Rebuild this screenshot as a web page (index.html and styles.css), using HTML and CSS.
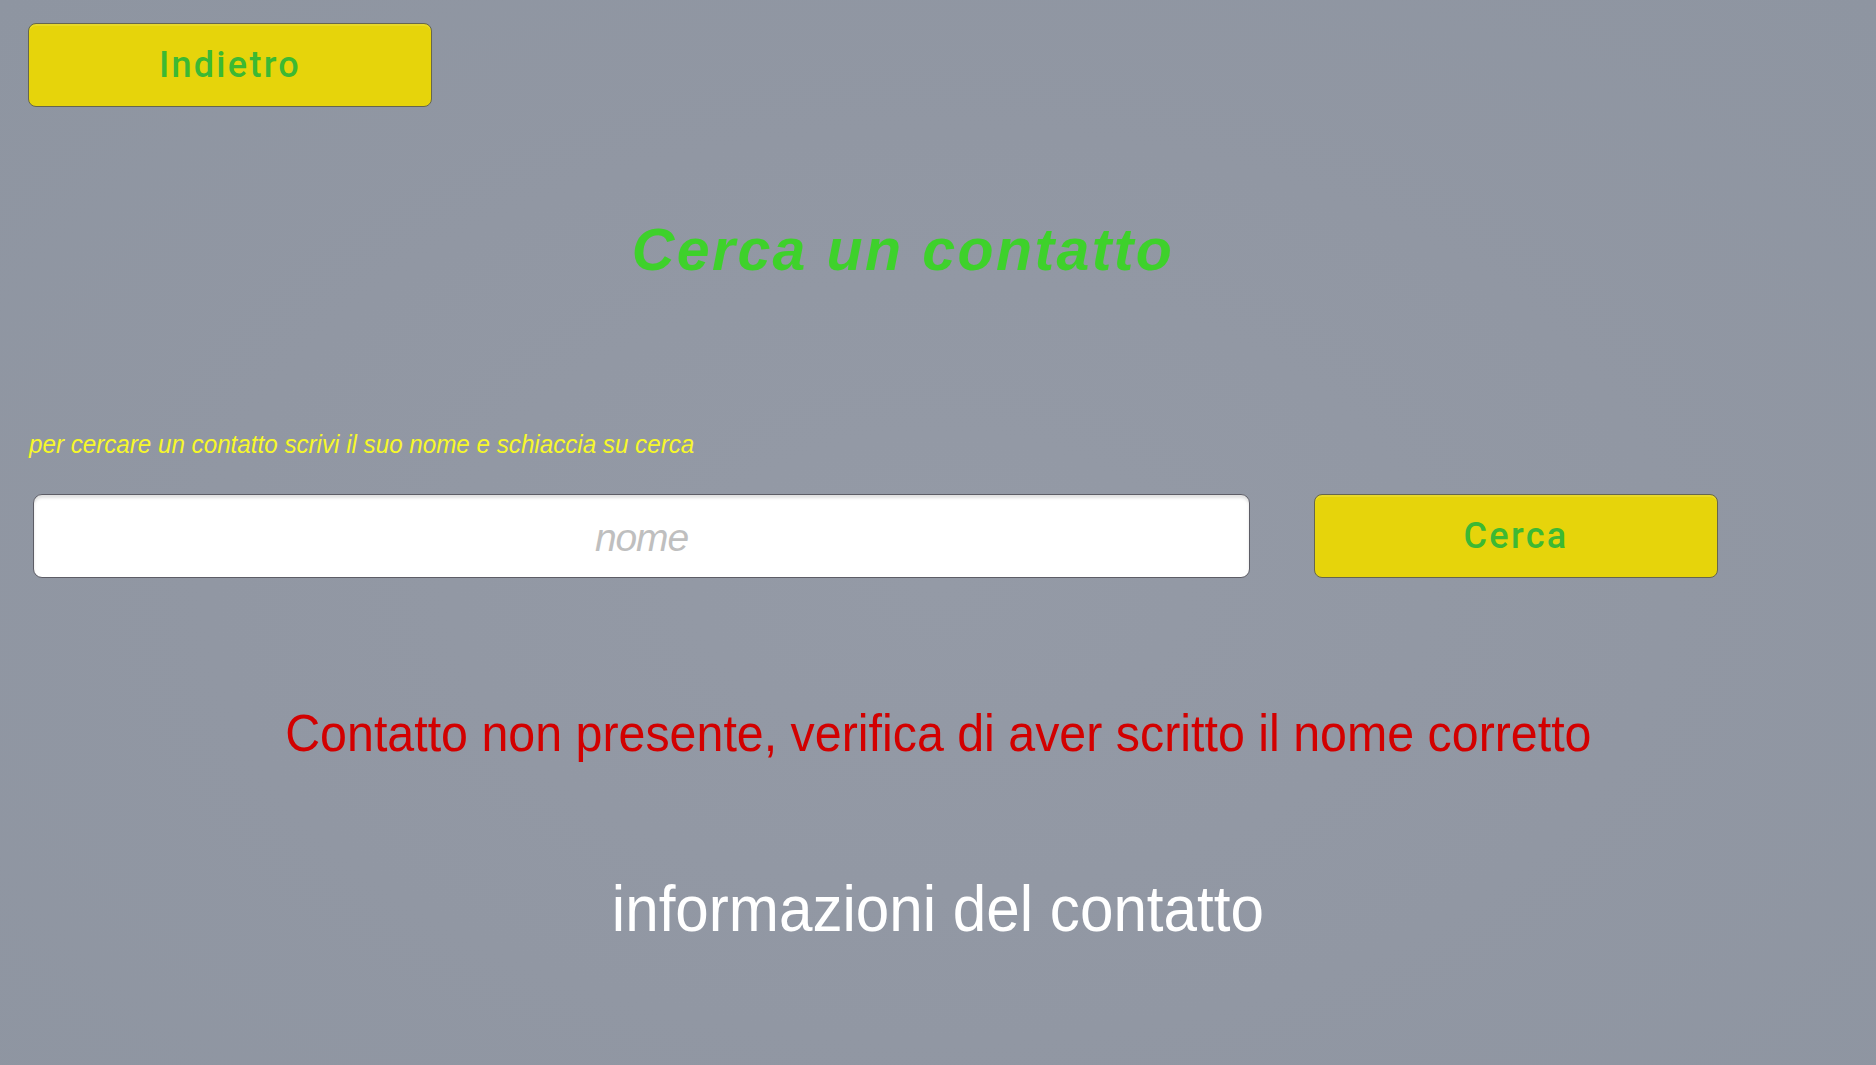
FILE: index.html
```html
<!DOCTYPE html>
<html lang="it">
<head>
<meta charset="utf-8">
<title>Cerca un contatto</title>
<link rel="stylesheet" href="styles.css">
</head>
<body>
<div class="screen">
  <div class="top-bar">
    <button class="btn btn-back">Indietro</button>
  </div>
  <h1 class="title">Cerca un contatto</h1>
  <p class="hint"><span class="hint-text">per cercare un contatto scrivi il suo nome e schiaccia su cerca</span></p>
  <div class="search-row">
    <input class="name-input" type="text" placeholder="nome">
    <button class="btn btn-search">Cerca</button>
  </div>
  <p class="error"><span class="error-text">Contatto non presente, verifica di aver scritto il nome corretto</span></p>
  <p class="info"><span class="info-text">informazioni del contatto</span></p>
</div>
</body>
</html>
```

FILE: styles.css
```css
html, body {
  margin: 0;
  padding: 0;
  height: 100%;
}

body {
  background: radial-gradient(ellipse at 50% 55%, #949aa6 0%, #9197a3 55%, #8e95a1 100%);
  font-family: "Liberation Sans", Arial, sans-serif;
  overflow: hidden;
}

.screen {
  width: 1876px;
  height: 1065px;
  display: flex;
  flex-direction: column;
}

.top-bar {
  padding: 23px 0 0 28px;
  display: flex;
}

.btn {
  width: 404px;
  height: 84px;
  background: #e6d40b;
  border: 1px solid #66664e;
  border-radius: 8px;
  box-shadow: inset 0 2px 0 rgba(255, 255, 255, 0.12);
  color: #3cb933;
  font-family: Roboto, "Liberation Sans", sans-serif;
  font-weight: 500;
  font-size: 36px;
  letter-spacing: 2.3px;
  padding: 0;
  cursor: pointer;
}

.title {
  margin: 108px 0 0 0;
  padding-right: 70px;
  text-align: center;
  font-size: 59px;
  line-height: 70px;
  font-style: italic;
  font-weight: bold;
  letter-spacing: 2.4px;
  color: #3ed12b;
}

.hint {
  margin: 144px 0 0 0;
  padding-left: 29px;
  font-size: 26px;
  line-height: 30px;
  height: 30px;
  white-space: nowrap;
}

.hint-text {
  display: inline-block;
  font-style: italic;
  color: #f7f82a;
  transform: scaleX(0.93);
  transform-origin: left center;
}

.search-row {
  margin-top: 35px;
  padding-left: 33px;
  display: flex;
  gap: 64px;
}

.name-input {
  width: 1217px;
  height: 84px;
  box-sizing: border-box;
  padding: 4px 0 0 0;
  background: #ffffff;
  border: 1px solid #5d5d66;
  border-radius: 9px;
  box-shadow: inset 0 3px 3px rgba(0, 0, 0, 0.12);
  font-family: "Liberation Sans", Arial, sans-serif;
  font-size: 39px;
  font-style: italic;
  letter-spacing: -1.2px;
  text-align: center;
  color: #333;
  outline: none;
}

.name-input::placeholder {
  color: #bfbfbf;
  font-style: italic;
}

.error {
  margin: 125px 0 0 0;
  text-align: center;
  font-size: 52px;
  line-height: 60px;
  white-space: nowrap;
}

.error-text {
  display: inline-block;
  color: #d20000;
  transform: scaleX(0.93);
}

.info {
  margin: 111px 0 0 0;
  text-align: center;
  font-size: 64px;
  line-height: 70px;
  white-space: nowrap;
}

.info-text {
  display: inline-block;
  color: #ffffff;
  transform: scaleX(0.94);
}
```
